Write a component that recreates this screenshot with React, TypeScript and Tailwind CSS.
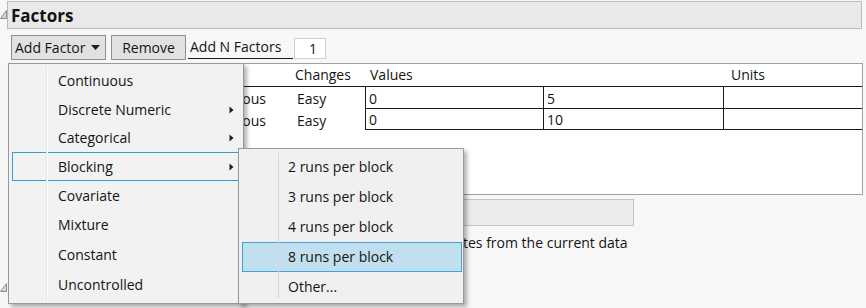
import React from "react";

const Tri = () => (
  <svg width="7" height="9" viewBox="0 0 7 9" className="shrink-0">
    <path d="M6.5 0.5V8.5H0.5Z" fill="#d8d8d8" stroke="#8c8c8c" strokeWidth="1" />
  </svg>
);

const SubArrow = () => (
  <svg width="5" height="8" viewBox="0 0 5 8" className="shrink-0">
    <path d="M0.5 0.5L4.5 4L0.5 7.5Z" fill="#1e1e1e" />
  </svg>
);

type MItem = { label: string; h: string; sub?: boolean; open?: boolean };

const mainItems: MItem[] = [
  { label: "Continuous", h: "h-[28px]" },
  { label: "Discrete Numeric", h: "h-[29px]", sub: true },
  { label: "Categorical", h: "h-[28px]", sub: true },
  { label: "Blocking", h: "h-[29px]", sub: true, open: true },
  { label: "Covariate", h: "h-[29px]" },
  { label: "Mixture", h: "h-[30px]" },
  { label: "Constant", h: "h-[30px]" },
  { label: "Uncontrolled", h: "h-[30px]" },
];

const subItems = ["2 runs per block", "3 runs per block", "4 runs per block", "8 runs per block", "Other..."];

const rows = [
  { id: 1, role: "Continuous", changes: "Easy", lo: "0", hi: "5", h: "h-[22px]" },
  { id: 2, role: "Continuous", changes: "Easy", lo: "0", hi: "10", h: "h-[21px]" },
];

export default function App() {
  return (
    <div className="relative w-[866px] h-[308px] overflow-hidden bg-[#f7f7f7] text-[14px] leading-none text-[#141414] font-['Open_Sans','Noto_Sans',sans-serif]">
      {/* Factors outline header */}
      <div className="flex items-start pt-[1px]">
        <div className="mt-[9px]">
          <Tri />
        </div>
        <div className="w-[855px] h-[28px] border border-[#bcbcbc] bg-[#e9e9e9] flex items-center pl-[3px] font-bold text-[17px]">
          Factors
        </div>
      </div>

      {/* Toolbar */}
      <div className="flex items-start mt-[6px] pl-[11px] h-[25px]">
        <button className="w-[95px] h-[25px] border border-[#8f8f8f] bg-[#e1e1e1] flex items-center pl-[3px] pr-[5px] justify-between">
          <span>Add Factor</span>
          <svg width="9" height="5" viewBox="0 0 9 5">
            <path d="M0 0H9L4.5 5Z" fill="#1e1e1e" />
          </svg>
        </button>
        <button className="ml-[5px] w-[75px] h-[25px] border border-[#8f8f8f] bg-[#e1e1e1] flex items-center justify-center">
          Remove
        </button>
        <div className="ml-[2px] w-[105px] h-[24px] border-b border-[#1a1a1a] flex items-center pl-[2px] whitespace-nowrap">
          Add N Factors
        </div>
        <div className="ml-[1px] mt-[3px] w-[32px] h-[21px] border border-[#cfcfcf] bg-white flex items-center justify-end pr-[8px]">
          1
        </div>
      </div>

      {/* Factors table */}
      <div className="ml-[8px] mt-[3px] w-[855px] h-[132px] border border-[#a0a0a0] bg-white">
        <div className="flex h-[23px] items-center border-b border-[#1a1a1a]">
          <div className="w-[286px]"></div>
          <span className="w-[75px]">Changes</span>
          <span className="w-[361px]">Values</span>
          <span>Units</span>
        </div>
        {rows.map((r) => (
          <div key={r.id} className={`flex ${r.h}`}>
            <div className="w-[356px] flex items-center pt-[2px]">
              <span className="w-[257px] text-right">{r.role}</span>
              <span className="pl-[31px]">{r.changes}</span>
            </div>
            <div className="w-[178px] border-l border-b border-[#1a1a1a] flex items-center pl-[3px] pt-[2px]">{r.lo}</div>
            <div className="w-[180px] border-l border-b border-[#1a1a1a] flex items-center pl-[3px] pt-[2px]">{r.hi}</div>
            <div className="flex-1 border-l border-b border-[#1a1a1a]"></div>
          </div>
        ))}
      </div>

      {/* Below table */}
      <div className="ml-[20px] mt-[4px] w-[614px] h-[27px] border border-[#c3c3c3] bg-[#ebebeb]"></div>
      <div className="flex mt-[7px] h-[20px] items-center">
        <span className="w-[463px]"></span>
        <span className="whitespace-nowrap">tes from the current data</span>
      </div>
      <div className="flex items-center mt-[30px]">
        <Tri />
      </div>

      {/* Main dropdown menu */}
      <div className="absolute left-[8px] top-[63px] w-[236px] border border-[#999999] bg-[#f2f2f2] pt-[3px] pb-[3px] shadow-[3px_3px_4px_rgba(0,0,0,0.3)]">
        <div className="absolute left-[37px] top-[3px] bottom-[3px] w-px bg-[#e4e4e4] z-10"></div>
        <div className="absolute left-[38px] top-[3px] bottom-[3px] w-px bg-[#fcfcfc] z-10"></div>
        {mainItems.map((it) => (
          <div
            key={it.label}
            className={`${it.h} ml-[3px] mr-[3px] border ${it.open ? "border-[#2ea0dc]" : "border-transparent"} flex items-center pl-[45px] pr-[5px]`}
          >
            <span className="flex-1">{it.label}</span>
            {it.sub && <SubArrow />}
          </div>
        ))}
      </div>

      {/* Blocking submenu */}
      <div className="absolute left-[238px] top-[148px] w-[226px] border border-[#999999] bg-[#f0f0f0] pt-[3px] pb-[1px] shadow-[3px_3px_4px_rgba(0,0,0,0.3)]">
        <div className="absolute left-[39px] top-[4px] bottom-[5px] w-px bg-[#d6d6d6] z-10"></div>
        {subItems.map((s) => (
          <div
            key={s}
            className={`h-[30px] ml-[3px] mr-[1px] border ${s.startsWith("8") ? "border-[#3ea3dd] bg-[#c1dfee]" : "border-transparent"} flex items-center pl-[45px]`}
          >
            {s}
          </div>
        ))}
      </div>
    </div>
  );
}
